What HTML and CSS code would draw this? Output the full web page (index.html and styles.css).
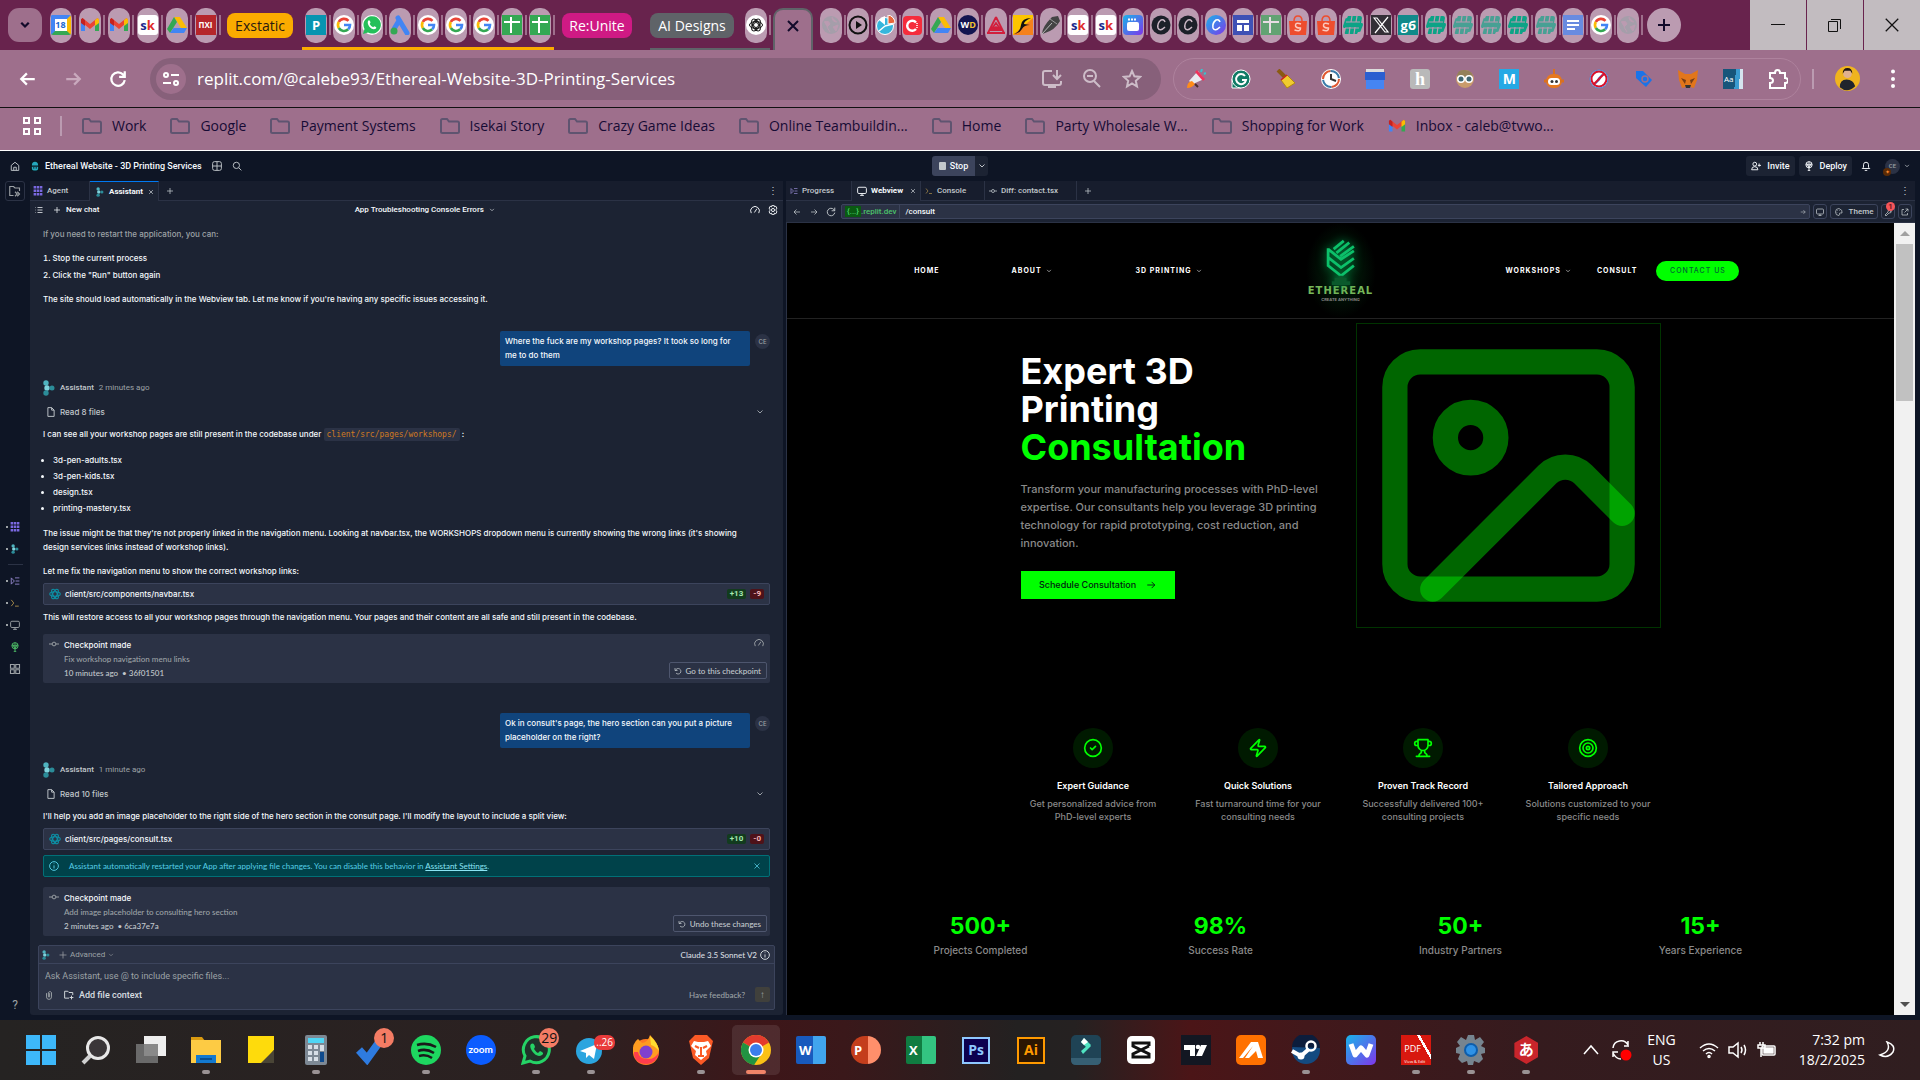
FILE: index.html
```html
<!DOCTYPE html>
<html lang="en">
<head>
<meta charset="utf-8">
<title>Ethereal Website - 3D Printing Services - Replit</title>
<link rel="stylesheet" href="styles.css">
</head>
<body>
<svg class="defs" aria-hidden="true">
  <symbol id="google" viewBox="0 0 20 20"><circle cx="10" cy="10" r="10" fill="#fff"/><g fill="none" stroke-width="2.6"><path d="M14.5 5.8A6 6 0 0 0 4.8 7" stroke="#ea4335"/><path d="M4.8 7a6 6 0 0 0 0 6" stroke="#fbbc05"/><path d="M4.8 13a6 6 0 0 0 9.4 1.3" stroke="#34a853"/><path d="M14.2 14.3A6 6 0 0 0 16 10h-6" stroke="#4285f4"/></g></symbol>
  <symbol id="gmail" viewBox="0 0 20 20"><path d="M1 4v12h4V8z" fill="#4285f4"/><path d="M19 4v12h-4V8z" fill="#34a853"/><path d="M1 4.500 2.500 3 10 9l7.500-6L19 4.500 18.500 7 10 14 1.500 7z" fill="#ea4335"/><path d="M15 5.200 17.500 3 19 4.500V8l-4 3z" fill="#fbbc04"/><path d="M1 8V4.500L2.500 3 5 5.200V11z" fill="#c5221f"/></symbol>
  <symbol id="drive" viewBox="0 0 20 20"><path d="M7 2h6l7 11h-6z" fill="#fbbc04"/><path d="M7 2 0 14l3 4 7-11z" fill="#34a853"/><path d="M6.500 13H20l-3 5H3z" fill="#4285f4"/></symbol>
  <symbol id="wa" viewBox="0 0 20 20"><circle cx="10" cy="10" r="10" fill="#fff"/><path d="m1 19 1.500-5A8.700 8.700 0 1 1 6 17.500z" fill="#25c05a"/><path d="M6 6c1-1.500 2-.5 2.500 1.500L7.700 9q1.200 2.500 3.500 3.300l1-1c2 .7 2.800 1.200 1.500 2.500C10 16 4.500 10 6 6z" fill="#fff"/></symbol>
  <symbol id="ads" viewBox="0 0 20 20"><path d="m8 3 9 15" stroke="#4285f4" stroke-width="5" stroke-linecap="round"/><path d="M10 4 4 14" stroke="#4285f4" stroke-width="5"/><circle cx="4" cy="16" r="3.500" fill="#34a853"/></symbol>
  <symbol id="sheet" viewBox="0 0 20 20"><path d="M0 0h20v20H0z" fill="#34a853"/><path d="M2 7h16M9 2v16" stroke="#fff" stroke-width="2"/></symbol>
  <symbol id="gpt" viewBox="0 0 20 20"><circle cx="10" cy="10" r="10" fill="#fff"/><g fill="none" stroke="#111"><circle cx="10" cy="10" r="2.500"/><ellipse cx="10" cy="10" rx="6.500" ry="3.500"/><ellipse cx="10" cy="10" rx="6.500" ry="3.500" transform="rotate(60 10 10)"/><ellipse cx="10" cy="10" rx="6.500" ry="3.500" transform="rotate(120 10 10)"/></g></symbol>
  <symbol id="globe" viewBox="0 0 20 20"><circle cx="10" cy="10" r="9" fill="#a59eaa"/><path d="M3 7q5-2 6 2l-3 3 3 5M11 2q0 5 5 5M12 12l5-2-2 6z" fill="#bb9bb1" stroke="#bb9bb1"/></symbol>
  <symbol id="play" viewBox="0 0 20 20"><circle cx="10" cy="10" r="8.500" fill="none" stroke="#111" stroke-width="2"/><path d="m8 6 6 4-6 4z" fill="#111"/></symbol>
  <symbol id="pie" viewBox="0 0 20 20"><circle cx="9" cy="11" r="8.500" fill="#36b6dc" stroke="#fff"/><path d="m9 11 8-2M9 11l-6 5" stroke="#fff" stroke-width="1.500"/><path d="M9 1v9L3 5q2-3 6-4z" fill="#fff"/><path d="M12 0a8 8 0 0 1 7 8l-7 1z" fill="#e8663a" stroke="#fff"/></symbol>
  <symbol id="redc" viewBox="0 0 20 20"><rect y="1" width="19" height="19" rx="4" fill="#f52c3c"/><path d="M13 7.500a5 5 0 1 0 0 6.500" fill="none" stroke="#fff" stroke-width="2.500"/><path d="M14 8v6" stroke="#fff" stroke-width="1.500" stroke-dasharray="1 1"/></symbol>
  <symbol id="tri" viewBox="0 0 20 20"><g fill="none" stroke="#d21f3c" stroke-width="1.800"><path d="M10 2 2 18M10 2l8 16M1 18h18M10 8l-5 7h10zM5 15l5-3 5 3"/></g></symbol>
  <symbol id="swan" viewBox="0 0 20 20"><path d="M0 0h20v20H0z" fill="#fdc500"/><path d="M0 20 20 3v17z" fill="#f5811e"/><path d="M1 19Q7 17 8 10t10-7q-7 3-7 6l6 1q-6 0-8 4-2 4-8 5z" fill="#111"/></symbol>
  <symbol id="pen" viewBox="0 0 20 20"><path d="M1 19Q1 12 11 2l6-1 2 5Q14 15 4 18z" fill="#444"/><path d="M1 19 11 8" stroke="#bbb"/><path d="m9 4 7 5" stroke="#999"/></symbol>
  <linearGradient id="gr" x2="1" y2="1"><stop stop-color="#18b5ea"/><stop offset="1" stop-color="#8036ea"/></linearGradient>
  <symbol id="grad" viewBox="0 0 20 20"><rect width="20" height="20" rx="4" fill="url(#gr)"/><rect x="4" y="7" width="12" height="9" rx="2" fill="#fff"/><path d="M5 4.500h8" stroke="#fff" stroke-width="2" stroke-dasharray="2 1"/></symbol>
  <symbol id="cdark" viewBox="0 0 20 20"><circle cx="10" cy="10" r="9.500" fill="#1c2029"/><path d="M14 7q-1-3-4-2-4 3-3 8 2 4 7-1" fill="none" stroke="#cbb8c6" stroke-width="1.500"/></symbol>
  <symbol id="canva" viewBox="0 0 20 20"><circle cx="10" cy="10" r="10" fill="url(#gr)"/><path d="M14 7q-1-3-4-2-4 3-3 8 2 4 7-1" fill="none" stroke="#fff" stroke-width="1.600"/></symbol>
  <symbol id="forms" viewBox="0 0 20 20"><path d="M0 0h20v20H0z" fill="#3f51b5"/><path d="M4 5h12v3H4zM4 10h5v6H4zM11 10h5v6h-5z" fill="#fff"/></symbol>
  <symbol id="shop" viewBox="0 0 20 20"><path d="M1 6h18l-1 14H2z" fill="#ee4d2d"/><path d="M6 6q0-5 4-5t4 5" fill="none" stroke="#ee4d2d" stroke-width="1.500"/><path d="M13 9q-5-2-5.500 1t5 3q.5 4-6 2" fill="none" stroke="#fbc8bd" stroke-width="1.500"/></symbol>
  <symbol id="weave" viewBox="0 0 20 20"><path d="M5 1h12q2 0 2 2l-1 5h1q1 0 1 2l-2 5q0 2-2 2h-1l-1 2H3q-2 0-1-2l1-4H1q-1 0-1-2l2-6q0-2 2-2z" fill="#0ca386"/><path d="M9 1 8 7m-1 5-1 8M14 1l-1 6m-1 5-1 7M3 7h14M2 13h14" stroke="#bb9bb1" stroke-width="1.200"/></symbol>
  <symbol id="xx" viewBox="0 0 20 20"><path d="M0 0h20v20H0z" fill="#332f36"/><path d="m3 3 11 14h3L6 3zM17 2 4 18" fill="none" stroke="#fff" stroke-width="1.200"/></symbol>
  <symbol id="doc" viewBox="0 0 20 20"><path d="M0 0h20v20H0z" fill="#688be0"/><path d="M4 6h12M4 10h12M4 14h8" stroke="#fff" stroke-width="1.800"/></symbol>

  <symbol id="x" viewBox="0 0 16 16"><path d="m3 3 10 10M13 3 3 13"/></symbol>
  <symbol id="plus" viewBox="0 0 16 16"><path d="M8 2v12M2 8h12"/></symbol>
  <symbol id="down" viewBox="0 0 16 16"><path d="m3 5 5 5 5-5"/></symbol>
  <symbol id="left" viewBox="0 0 16 16"><path d="M14 8H2m5-5L2 8l5 5"/></symbol>
  <symbol id="right" viewBox="0 0 16 16"><path d="M2 8h12M9 3l5 5-5 5"/></symbol>
  <symbol id="reload" viewBox="0 0 16 16"><path d="M14 9a6 6 0 1 1-1.500-5L14 6M14 1v5H9"/></symbol>
  <symbol id="undo" viewBox="0 0 16 16"><path d="M3 7a5.500 5.500 0 1 1 1 5M2 2v5h5"/></symbol>
  <symbol id="folder" viewBox="0 0 20 16"><path d="M1 2.500Q1 1 2.500 1H7l2 2.500h8.500Q19 3.500 19 5v8.500q0 1.500-1.500 1.500h-15Q1 15 1 13.500z"/></symbol>
  <symbol id="monitor" viewBox="0 0 16 16"><rect x="1" y="2" width="14" height="10" rx="2"/><path d="M5 15h6M8 12v3"/></symbol>
  <symbol id="home" viewBox="0 0 16 16"><path d="m2 7 6-5 6 5v8H2zM6 15v-5h4v5"/></symbol>
  <symbol id="search" viewBox="0 0 16 16"><circle cx="7" cy="7" r="5"/><path d="m11 11 4 4"/></symbol>
  <symbol id="grid4" viewBox="0 0 16 16"><path d="M2 2h5v5H2zM9 2h5v5H9zM2 9h5v5H2zM9 9h5v5H9z"/></symbol>
  <symbol id="layout" viewBox="0 0 16 16"><rect x="1" y="1" width="14" height="14" rx="3"/><path d="M1 8h14M8 1v14"/></symbol>
  <symbol id="dots9" viewBox="0 0 16 16"><path d="M3 0v16M8 0v16M13 0v16" stroke-width="4" stroke-dasharray="4 1.500"/></symbol>
  <symbol id="asst" viewBox="0 0 12 16"><circle cx="3" cy="3" r="2.700" fill="#4fb3bf"/><circle cx="4" cy="8" r="2.700" fill="#7fd3dc"/><circle cx="9" cy="8" r="2.500" fill="#2b8c99"/><circle cx="3" cy="13" r="2.700" fill="#2b8c99"/></symbol>
  <symbol id="prog" viewBox="0 0 16 16"><path d="M2 3v10M2 3l5 5-5 5M8 3h7M9 8h6M8 13h7"/></symbol>
  <symbol id="term" viewBox="0 0 16 16"><path d="m2 3 4 5-4 5M8 13h6"/></symbol>
  <symbol id="commit" viewBox="0 0 16 16"><circle cx="8" cy="8" r="3"/><path d="M0 8h5m6 0h5"/></symbol>
  <symbol id="tree" viewBox="0 0 16 16"><circle cx="8" cy="6" r="5"/><path d="M3 6h10M8 1v14M4 3l4 8 4-8M6 15h4"/></symbol>
  <symbol id="gauge" viewBox="0 0 16 16"><path d="M2 13a7 7 0 1 1 12 0M7 12l4-6"/></symbol>
  <symbol id="gear" viewBox="0 0 16 16"><circle cx="8" cy="8" r="2.500"/><path d="m6 1-.5 2L3.500 2 1.800 5 3 7v2l-1.200 2 1.700 3 2-1 .5 2h4l.5-2 2 1 1.700-3L13 9V7l1.200-2-1.700-3-2 1L10 1z"/></symbol>
  <symbol id="palette" viewBox="0 0 16 16"><path d="M8 1a7 7 0 1 0 0 14q2-1 1-3t2-2h3q2-6-6-9zM5 5v1M9 4v1M4 9v1"/></symbol>
  <symbol id="list" viewBox="0 0 16 16"><path d="M5 3h10M5 8h10M5 13h10M1 3h1M1 8h1M1 13h1"/></symbol>
  <symbol id="file" viewBox="0 0 12 16"><path d="M1 1h6l4 4v10H1zM7 1v4h4"/></symbol>
  <symbol id="react" viewBox="0 0 16 16"><ellipse cx="8" cy="8" rx="7" ry="3"/><ellipse cx="8" cy="8" rx="7" ry="3" transform="rotate(60 8 8)"/><ellipse cx="8" cy="8" rx="7" ry="3" transform="rotate(120 8 8)"/></symbol>
  <symbol id="info" viewBox="0 0 16 16"><circle cx="8" cy="8" r="7"/><path d="M8 7v5M8 4v1"/></symbol>
  <symbol id="clip" viewBox="0 0 16 16"><path d="M4 5v6a4 4 0 0 0 8 0V4a3 3 0 0 0-5 0v7h2V5"/></symbol>
  <symbol id="folderplus" viewBox="0 0 16 16"><path d="M8 13H1V2h5l2 2h6v4M12 9v6M9 12h6"/></symbol>
  <symbol id="spark" viewBox="0 0 16 16"><path d="M8 1v14M1 8h14"/></symbol>
  <symbol id="bell" viewBox="0 0 16 16"><path d="M2 12h12l-2-2V6a4 4 0 0 0-8 0v4zM6 15h4"/></symbol>
  <symbol id="user" viewBox="0 0 16 16"><circle cx="6" cy="5" r="3"/><path d="M1 14q0-5 5-5t5 5zM13 4v5m-2-2h5"/></symbol>
  <symbol id="ext" viewBox="0 0 16 16"><path d="M6 3H2v11h11v-4M9 2h5v5M14 2 7 9"/></symbol>
  <symbol id="wrench" viewBox="0 0 16 16"><path d="m2 14 6-6q-1-5 5-6l-2 3 2 2 2-2q0 6-5 5l-6 6z"/></symbol>
  <symbol id="star" viewBox="0 0 20 20"><path d="m10 2 2.400 5.300 5.600.6-4.200 3.900 1.200 5.700-5-3-5 3 1.200-5.700L2 7.900l5.600-.6z"/></symbol>
</svg>

<header class="browser">
  <div class="tabstrip">
    <button class="tab-menu" aria-label="Search tabs"><svg class="i s12"><use href="#down"/></svg></button>
    <div class="tabs t-a">
      <button><b class="fav cal">18</b></button><button aria-label="Gmail"><svg><use href="#gmail"/></svg></button><button aria-label="Gmail"><svg><use href="#gmail"/></svg></button><button><b class="fav sk">s<i>k</i></b></button><button aria-label="Drive"><svg><use href="#drive"/></svg></button><button><b class="fav rm">ПXI</b></button>
    </div>
    <button class="group orange">Exstatic</button>
    <div class="tabs t-b">
      <button><b class="fav teal">P</b></button><button aria-label="Google"><svg><use href="#google"/></svg></button><button aria-label="WhatsApp"><svg><use href="#wa"/></svg></button><button aria-label="Ads"><svg><use href="#ads"/></svg></button><button aria-label="Google"><svg><use href="#google"/></svg></button><button aria-label="Google"><svg><use href="#google"/></svg></button><button aria-label="Google"><svg><use href="#google"/></svg></button><button aria-label="Sheet"><svg><use href="#sheet"/></svg></button><button aria-label="Sheet"><svg><use href="#sheet"/></svg></button>
    </div>
    <button class="group pink">Re:Unite</button>
    <div class="ai">
      <button class="group grey">AI Designs</button>
      <div class="tabs t-c"><button aria-label="ChatGPT"><svg><use href="#gpt"/></svg></button></div>
    </div>
    <button class="active-tab" aria-label="Close tab"><svg class="i s16"><use href="#x"/></svg></button>
    <div class="tabs t-d">
      <button aria-label="New tab"><svg><use href="#globe"/></svg></button><button aria-label="Player"><svg><use href="#play"/></svg></button><button aria-label="Chart"><svg><use href="#pie"/></svg></button><button aria-label="Carousell"><svg><use href="#redc"/></svg></button><button aria-label="Drive"><svg><use href="#drive"/></svg></button><button><b class="fav navy">W<i>D</i></b></button><button aria-label="Prism"><svg><use href="#tri"/></svg></button><button aria-label="Swan"><svg><use href="#swan"/></svg></button><button aria-label="Pen"><svg><use href="#pen"/></svg></button><button><b class="fav sk">s<i>k</i></b></button><button><b class="fav sk">s<i>k</i></b></button><button aria-label="Planner"><svg><use href="#grad"/></svg></button><button aria-label="C"><svg><use href="#cdark"/></svg></button><button aria-label="C"><svg><use href="#cdark"/></svg></button><button aria-label="Canva"><svg><use href="#canva"/></svg></button><button aria-label="Forms"><svg><use href="#forms"/></svg></button><button class="dim" aria-label="Sheet"><svg><use href="#sheet"/></svg></button><button aria-label="Shopee"><svg><use href="#shop"/></svg></button><button aria-label="Shopee"><svg><use href="#shop"/></svg></button><button aria-label="Weave"><svg><use href="#weave"/></svg></button><button aria-label="X"><svg><use href="#xx"/></svg></button><button><b class="fav gb">gб</b></button><button aria-label="Weave"><svg><use href="#weave"/></svg></button><button class="dim" aria-label="Weave"><svg><use href="#weave"/></svg></button><button class="dim" aria-label="Weave"><svg><use href="#weave"/></svg></button><button aria-label="Weave"><svg><use href="#weave"/></svg></button><button class="dim" aria-label="Weave"><svg><use href="#weave"/></svg></button><button aria-label="Doc"><svg><use href="#doc"/></svg></button><button aria-label="Google"><svg><use href="#google"/></svg></button><button aria-label="New tab"><svg><use href="#globe"/></svg></button>
    </div>
    <button class="new-tab" aria-label="New tab"><svg class="i s16 w2"><use href="#plus"/></svg></button>
    <div class="win">
      <button aria-label="Minimize"><svg class="i s16 w1" viewBox="0 0 16 16"><path d="M1 7.500h14"/></svg></button>
      <button aria-label="Restore"><svg class="i s16 w1" viewBox="0 0 16 16"><path d="M1.500 4.500h9v10h-9zM4 2.500h9.500V12"/></svg></button>
      <button aria-label="Close"><svg class="i s20 w1"><use href="#x"/></svg></button>
    </div>
  </div>
  <div class="toolbar">
    <button aria-label="Back"><svg class="i s18 w2"><use href="#left"/></svg></button>
    <button class="faded" aria-label="Forward"><svg class="i s18 w2"><use href="#right"/></svg></button>
    <button aria-label="Reload"><svg class="i s18 w2"><use href="#reload"/></svg></button>
    <div class="omni">
      <button class="site" aria-label="Site information"><svg class="i s18 w2" viewBox="0 0 18 18"><circle cx="4" cy="5" r="2"/><path d="M9 5h8M1 13h8"/><circle cx="14" cy="13" r="2"/></svg></button>
      <input class="address" aria-label="Address" value="replit.com/@calebe93/Ethereal-Website-3D-Printing-Services">
      <div class="omni-icons">
        <button aria-label="Install"><svg class="i s20 w2" viewBox="0 0 20 20"><path d="M10 2H3q-2 0-2 2v10q0 2 2 2h14q2 0 2-2v-2M6 18h8M15 1v9m-4-4 4 4 4-4"/></svg></button>
        <button aria-label="Zoom"><svg class="i s20 w2" viewBox="0 0 20 20"><circle cx="8" cy="7" r="6"/><path d="m12 12 6 6M5 7h6"/></svg></button>
        <button aria-label="Bookmark"><svg class="i s20 w2"><use href="#star"/></svg></button>
      </div>
    </div>
    <div class="exts">
      <button aria-label="Megaphone"><svg viewBox="0 0 20 20"><path d="m3 12 9-10 6 8-11 5z" fill="#e8eaf0"/><path d="m11 1 8 9-2 2-8-9z" fill="#f0325c"/><path d="M1 19q0-6 5-7l3 3q-3 4-8 4z" fill="#ff8c1a"/><path d="m9 15 3 3" stroke="#4a2c2c" stroke-width="2"/><path d="m15 3 1-3M18 5l2-1" stroke="#35c4cf" stroke-width="2"/></svg></button>
      <button aria-label="Grammarly"><svg viewBox="0 0 20 20"><path d="M1 10v9h9" fill="#107b66" stroke="#fff"/><circle cx="10" cy="10" r="9" fill="#107b66" stroke="#fff"/><path d="M14 7a5 5 0 1 0 1 4h-4" fill="none" stroke="#fff" stroke-width="2"/></svg></button>
      <button aria-label="Cleaner"><svg viewBox="0 0 20 20"><path d="m2 1 9 9" stroke="#8a5a12" stroke-width="4"/><path d="m5 11 6-5 8 8-8 5z" fill="#f0cc2e" stroke="#b38a10"/><path d="m5 11 6-5" stroke="#c22" stroke-width="1.500"/></svg></button>
      <button aria-label="Timer"><svg viewBox="0 0 20 20"><circle cx="10" cy="10" r="10" fill="#fff"/><circle cx="10" cy="10" r="8" fill="none" stroke="#e0572f" stroke-width="2" stroke-dasharray="12 13"/><circle cx="10" cy="10" r="8" fill="none" stroke="#3a7aa8" stroke-width="2" stroke-dasharray="0 12 12 1"/><path d="M10 5v5l5 2" fill="none" stroke="#333" stroke-width="2"/></svg></button>
      <button aria-label="Notes"><svg viewBox="0 0 20 20"><path d="M1 0h18v3H1z" fill="#ddd"/><path d="M0 3h20v8H0z" fill="#2b5fd0"/><path d="M1 11h18v9H1z" fill="#4585f2"/></svg></button>
      <button><b class="fav honey">h</b></button>
      <button aria-label="Reader"><svg viewBox="0 0 20 20"><circle cx="10" cy="10" r="9" fill="#c99b6b"/><path d="M2 8Q2 0 10 1t8 7z" fill="#94805a"/><circle cx="6" cy="10" r="4" fill="#fff"/><circle cx="14" cy="10" r="4" fill="#fff"/><circle cx="6" cy="10" r="2.500" fill="#3e6570"/><circle cx="14" cy="10" r="2.500" fill="#3e6570"/></svg></button>
      <button><b class="fav malw">M</b></button>
      <button aria-label="Robot"><svg viewBox="0 0 20 20"><path d="M10 0v5" stroke="#d9701f" stroke-width="2"/><rect x="2" y="5" width="16" height="14" rx="7" fill="#e6781e"/><path d="M0 12h20" stroke="#d9701f" stroke-width="3"/><rect x="4" y="9" width="12" height="7" rx="3.500" fill="#fff"/><circle cx="8" cy="12.500" r="1.500" fill="#333"/><circle cx="12.500" cy="12.500" r="1.500" fill="#333"/></svg></button>
      <button aria-label="Blocker"><svg viewBox="0 0 20 20"><circle cx="10" cy="10" r="9" fill="#fff" stroke="#4a90e2"/><path d="m14 4-3 7-5 5 3-7z" fill="#2b62c9"/><circle cx="10" cy="10" r="7.500" fill="none" stroke="#d6102c" stroke-width="2"/><path d="M15 5 5 15" stroke="#d6102c" stroke-width="2"/></svg></button>
      <button aria-label="Tag"><svg viewBox="0 0 20 20"><path d="M2 2h7l9 9-6 7L2 9z" fill="#1a73e8"/><circle cx="11" cy="10" r="3" fill="none" stroke="#9c6f8b" stroke-width="1.500"/></svg></button>
      <button aria-label="MetaMask"><svg viewBox="0 0 20 20"><path d="m0 1 7 4h6l7-4-1 10-3 8-4-1H8l-4 1-3-8z" fill="#e2761b"/><path d="M3 9 8 11l-1 4zM17 9l-5 2 1 4z" fill="#763d16"/><path d="M7 16h6l-1 3H8z" fill="#333"/></svg></button>
      <button><b class="fav dict">Aa</b></button>
      <button aria-label="Extensions"><svg class="i w2" viewBox="0 0 20 20"><path d="M2 4h5q0-3 2.500-3T12 4h5v5q3 0 3 2.500T17 14v5H2v-5q3 0 3-2.500T2 9z"/></svg></button>
    </div>
    <span class="bar"></span>
    <button class="profile" aria-label="Profile"><svg viewBox="0 0 26 26"><circle cx="13" cy="13" r="13" fill="#f0b41e"/><path d="M5 22q0-8 7-8t9 7q-8 8-16 1z" fill="#20242c"/><circle cx="13" cy="8" r="4.500" fill="#e0b090"/><path d="M8 8q0-6 5-6t5 6l-2-3h-6z" fill="#1c1414"/></svg></button>
    <button class="kebab" aria-label="Menu"><svg class="s20" viewBox="0 0 20 20" fill="#fff"><circle cx="10" cy="2.500" r="2"/><circle cx="10" cy="10" r="2"/><circle cx="10" cy="17" r="2"/></svg></button>
  </div>
  <nav class="bookmarks">
    <svg class="i s20 w2 apps" viewBox="0 0 20 20"><path d="M2 2h5v5H2zM13 2h5v5h-5zM2 13h5v5H2zM13 13h5v5h-5z"/></svg>
    <span class="bar"></span>
    <a href="#"><svg class="i fold"><use href="#folder"/></svg>Work</a><a href="#"><svg class="i fold"><use href="#folder"/></svg>Google</a><a href="#"><svg class="i fold"><use href="#folder"/></svg>Payment Systems</a><a href="#"><svg class="i fold"><use href="#folder"/></svg>Isekai Story</a><a href="#"><svg class="i fold"><use href="#folder"/></svg>Crazy Game Ideas</a><a href="#"><svg class="i fold"><use href="#folder"/></svg>Online Teambuildin...</a><a href="#"><svg class="i fold"><use href="#folder"/></svg>Home</a><a href="#"><svg class="i fold"><use href="#folder"/></svg>Party Wholesale W...</a><a href="#"><svg class="i fold"><use href="#folder"/></svg>Shopping for Work</a><a href="#"><svg class="s18"><use href="#gmail"/></svg>Inbox - caleb@tvwo...</a>
  </nav>
</header>

<main class="replit">
  <div class="topbar">
    <div class="top-left">
      <button aria-label="Home"><svg class="i s10"><use href="#home"/></svg></button>
      <span class="appicon"><svg class="s10" viewBox="0 0 16 16"><path d="M3 7q0-6 5-6t5 6zM3 9h10v3q0 3-3 3H6q-3 0-3-3z" fill="#25a9bd"/><path d="M5 11h2m2 0h2" stroke="#0b2229" stroke-width="2"/></svg></span>
      <b>Ethereal Website - 3D Printing Services</b>
      <button aria-label="Layout"><svg class="i s10"><use href="#layout"/></svg></button>
      <button aria-label="Search"><svg class="i s10"><use href="#search"/></svg></button>
    </div>
    <div class="stop"><button class="stop-main"><i></i>Stop</button><button class="stop-more" aria-label="Run options"><svg class="i s8"><use href="#down"/></svg></button></div>
    <div class="top-right">
      <button class="chip"><svg class="i s10"><use href="#user"/></svg>Invite</button>
      <button class="chip"><svg class="i s10"><use href="#tree"/></svg>Deploy</button>
      <button class="bell" aria-label="Notifications"><svg class="i s10"><use href="#bell"/></svg></button>
      <span class="me">CE<i>✦</i></span>
      <svg class="i s6"><use href="#down"/></svg>
    </div>
  </div>
  <div class="work">
    <aside class="rail">
      <button class="rail-files" aria-label="Files"><svg class="i s12" viewBox="0 0 16 16"><path d="M6 14H1V2h5l2 2h6v4M8 9l3 3-3 3m3-6 3 3-3 3"/></svg></button>
      <div class="rail-tools">
        <button class="on violet" aria-label="Agent"><svg class="i s10"><use href="#dots9"/></svg></button>
        <button class="on" aria-label="Assistant"><svg class="s10"><use href="#asst"/></svg></button>
        <hr>
        <button class="on lilac" aria-label="Progress"><svg class="i s10"><use href="#prog"/></svg></button>
        <button class="on sand" aria-label="Console"><svg class="i s10"><use href="#term"/></svg></button>
        <button class="on" aria-label="Webview"><svg class="i s10"><use href="#monitor"/></svg></button>
        <button class="leaf" aria-label="Deployments"><svg class="i s10"><use href="#tree"/></svg></button>
        <button aria-label="All tools"><svg class="i s12"><use href="#grid4"/></svg></button>
      </div>
      <button class="help">?</button>
    </aside>

    <section class="pane chat-pane">
      <div class="pane-tabs">
        <button class="ptab agent"><svg class="i s10 violet"><use href="#dots9"/></svg>Agent</button>
        <button class="ptab sel"><svg class="s10"><use href="#asst"/></svg>Assistant<svg class="i s6 close"><use href="#x"/></svg></button>
        <button class="ptab add" aria-label="Add tab"><svg class="i s8"><use href="#plus"/></svg></button>
        <button class="more" aria-label="Pane menu">⋮</button>
      </div>
      <div class="chat-head">
        <div><svg class="i s8"><use href="#list"/></svg><button class="newchat"><svg class="i s8"><use href="#plus"/></svg>New chat</button></div>
        <button class="ttl">App Troubleshooting Console Errors<svg class="i s6"><use href="#down"/></svg></button>
        <div class="end"><svg class="i s10"><use href="#gauge"/></svg><svg class="i s10"><use href="#gear"/></svg></div>
      </div>
      <div class="chat">
        <p class="old">If you need to restart the application, you can:</p>
        <ol><li>Stop the current process</li><li>Click the "Run" button again</li></ol>
        <p>The site should load automatically in the Webview tab. Let me know if you're having any specific issues accessing it.</p>
        <div class="user"><p>Where the fuck are my workshop pages? It took so long for me to do them</p><span class="av">CE</span></div>
        <div class="who"><svg><use href="#asst"/></svg><b>Assistant</b> 2 minutes ago</div>
        <div class="read"><svg class="i s10"><use href="#file"/></svg>Read 8 files<svg class="i s8 push"><use href="#down"/></svg></div>
        <p class="intro">I can see all your workshop pages are still present in the codebase under <code>client/src/pages/workshops/</code> :</p>
        <ul><li>3d-pen-adults.tsx</li><li>3d-pen-kids.tsx</li><li>design.tsx</li><li>printing-mastery.tsx</li></ul>
        <p>The issue might be that they're not properly linked in the navigation menu. Looking at navbar.tsx, the WORKSHOPS dropdown menu is currently showing the wrong links (it's showing design services links instead of workshop links).</p>
        <p class="gap">Let me fix the navigation menu to show the correct workshop links:</p>
        <div class="filebox"><svg class="i s12 cyan"><use href="#react"/></svg>client/src/components/navbar.tsx<em class="add">+13</em><em class="del">-9</em></div>
        <p class="after">This will restore access to all your workshop pages through the navigation menu. Your pages and their content are all safe and still present in the codebase.</p>
        <div class="check">
          <svg class="i s10"><use href="#commit"/></svg>
          <div><b>Checkpoint made</b><span>Fix workshop navigation menu links</span><span class="lt">10 minutes ago &nbsp;• 36f01501</span></div>
          <div class="check-r"><svg class="i s10"><use href="#gauge"/></svg><button><svg class="i s8"><use href="#undo"/></svg>Go to this checkpoint</button></div>
        </div>
        <div class="user"><p>Ok in consult's page, the hero section can you put a picture placeholder on the right?</p><span class="av">CE</span></div>
        <div class="who"><svg><use href="#asst"/></svg><b>Assistant</b> 1 minute ago</div>
        <div class="read"><svg class="i s10"><use href="#file"/></svg>Read 10 files<svg class="i s8 push"><use href="#down"/></svg></div>
        <p class="intro">I'll help you add an image placeholder to the right side of the hero section in the consult page. I'll modify the layout to include a split view:</p>
        <div class="filebox"><svg class="i s12 cyan"><use href="#react"/></svg>client/src/pages/consult.tsx<em class="add">+10</em><em class="del">-0</em></div>
        <div class="notice"><svg class="i s10"><use href="#info"/></svg><span>Assistant automatically restarted your App after applying file changes. You can disable this behavior in <a href="#">Assistant Settings</a>.</span><button aria-label="Dismiss"><svg class="i s8"><use href="#x"/></svg></button></div>
        <div class="check last">
          <svg class="i s10"><use href="#commit"/></svg>
          <div><b>Checkpoint made</b><span>Add image placeholder to consulting hero section</span><span class="lt">2 minutes ago &nbsp;• 6ca37e7a</span></div>
          <div class="check-r"><button><svg class="i s8"><use href="#undo"/></svg>Undo these changes</button></div>
        </div>
      </div>
      <form class="composer">
        <div class="comp-top"><svg class="s10"><use href="#asst"/></svg><button type="button"><svg class="i s8"><use href="#spark"/></svg>Advanced<svg class="i s6"><use href="#down"/></svg></button><span class="model">Claude 3.5 Sonnet V2<svg class="i s10"><use href="#info"/></svg></span></div>
        <input aria-label="Message" placeholder="Ask Assistant, use @ to include specific files...">
        <div class="comp-bot"><svg class="i s10"><use href="#clip"/></svg><button type="button" class="ctx"><svg class="i s10"><use href="#folderplus"/></svg>Add file context</button><a href="#">Have feedback?</a><button type="button" class="send">↑</button></div>
      </form>
    </section>

    <section class="pane web-pane">
      <div class="pane-tabs">
        <button class="ptab p1"><svg class="i s8 lilac"><use href="#prog"/></svg>Progress</button>
        <button class="ptab sel"><svg class="i s10"><use href="#monitor"/></svg>Webview<svg class="i s6 close"><use href="#x"/></svg></button>
        <button class="ptab p3"><svg class="i s8 sand"><use href="#term"/></svg>Console</button>
        <button class="ptab p4"><svg class="i s8"><use href="#commit"/></svg>Diff: contact.tsx</button>
        <button class="ptab add" aria-label="Add tab"><svg class="i s8"><use href="#plus"/></svg></button>
        <button class="more" aria-label="Pane menu">⋮</button>
      </div>
      <div class="urlrow">
        <button aria-label="Back"><svg class="i s8"><use href="#left"/></svg></button>
        <button aria-label="Forward"><svg class="i s8"><use href="#right"/></svg></button>
        <button aria-label="Reload"><svg class="i s10"><use href="#reload"/></svg></button>
        <label class="urlbox"><span class="host"><mark>{...}</mark>.replit.dev</span><input aria-label="Path" value="/consult"><svg class="i s6"><use href="#right"/></svg></label>
        <button class="ob" aria-label="Device"><svg class="i s8"><use href="#monitor"/></svg></button>
        <button class="ob wide"><svg class="i s8"><use href="#palette"/></svg>Theme</button>
        <button class="ob" aria-label="Developer tools"><svg class="i s8"><use href="#wrench"/></svg><i class="cnt">1</i></button>
        <button class="ob" aria-label="Open in new tab"><svg class="i s8"><use href="#ext"/></svg></button>
      </div>
      <div class="view">
        <div class="site-page">
          <nav class="sitenav">
            <div class="navl"><a href="#">HOME</a><div class="menus"><a href="#">ABOUT<svg class="i s6"><use href="#down"/></svg></a><a href="#">3D PRINTING<svg class="i s6"><use href="#down"/></svg></a></div></div>
            <div class="logo"><svg viewBox="0 0 36 50"><g fill="none" stroke="#0cc06a" stroke-width="3"><path d="M4 10v19l14 11 14-11M4 11l14 11 14-9M4 20l14 11 14-10M13 15 27 4M10 11 21 2M17 19l15-11"/></g><path d="M18 40v3M11 44h13M8 48h20" stroke="#0a5a2c" stroke-width="4"/></svg><b>ETHEREAL</b><small>CREATE ANYTHING</small></div>
            <div class="navr"><a href="#">WORKSHOPS<svg class="i s6"><use href="#down"/></svg></a><div class="cta"><a href="#">CONSULT</a><a class="contact" href="#">CONTACT US</a></div></div>
          </nav>
          <section class="hero">
            <div class="hero-text">
              <h1>Expert 3D<br>Printing<br><span>Consultation</span></h1>
              <p>Transform your manufacturing processes with PhD-level expertise. Our consultants help you leverage 3D printing technology for rapid prototyping, cost reduction, and innovation.</p>
              <button>Schedule Consultation<svg class="i s10"><use href="#right"/></svg></button>
            </div>
            <div class="ph"><svg viewBox="0 0 24 24"><rect x="3" y="3" width="18" height="18" rx="2"/><circle cx="9" cy="9" r="2"/><path d="m21 15-3.086-3.086a2 2 0 0 0-2.828 0L6 21"/></svg></div>
          </section>
          <section class="feats">
            <div><span><svg viewBox="0 0 24 24"><circle cx="12" cy="12" r="10"/><path d="m9 12 2 2 4-4"/></svg></span><h3>Expert Guidance</h3><p>Get personalized advice from PhD-level experts</p></div>
            <div><span><svg viewBox="0 0 24 24"><path d="M4 14a1 1 0 0 1-.78-1.630l9.900-10.200a.5.5 0 0 1 .86.460l-1.920 6.020A1 1 0 0 0 13 10h7a1 1 0 0 1 .78 1.630l-9.900 10.200a.5.5 0 0 1-.86-.460l1.920-6.020A1 1 0 0 0 11 14z"/></svg></span><h3>Quick Solutions</h3><p>Fast turnaround time for your consulting needs</p></div>
            <div><span><svg viewBox="0 0 24 24"><path d="M6 9H4.500a2.500 2.500 0 0 1 0-5H6M18 9h1.500a2.500 2.500 0 0 0 0-5H18M4 22h16M10 14.660V17c0 .55-.47.98-.97 1.210C7.850 18.750 7 20.240 7 22M14 14.660V17c0 .55.47.98.97 1.210C16.150 18.750 17 20.240 17 22M18 2H6v7a6 6 0 0 0 12 0V2Z"/></svg></span><h3>Proven Track Record</h3><p>Successfully delivered 100+ consulting projects</p></div>
            <div><span><svg viewBox="0 0 24 24"><circle cx="12" cy="12" r="10"/><circle cx="12" cy="12" r="6"/><circle cx="12" cy="12" r="2"/></svg></span><h3>Tailored Approach</h3><p>Solutions customized to your specific needs</p></div>
          </section>
          <section class="stats">
            <div><b>500+</b>Projects Completed</div><div><b>98%</b>Success Rate</div><div><b>50+</b>Industry Partners</div><div><b>15+</b>Years Experience</div>
          </section>
        </div>
        <div class="scroll"><i class="up"></i><span></span><i class="dn"></i></div>
      </div>
    </section>
  </div>
</main>

<footer class="taskbar">
  <div class="apps-row">
    <button aria-label="Start"><svg viewBox="0 0 30 30"><path d="M0 0h14v14H0zM16 0h14v14H16zM0 16h14v14H0zM16 16h14v14H16z" fill="#3db8fa"/></svg></button>
    <button aria-label="Search"><svg viewBox="0 0 30 30"><circle cx="17" cy="13" r="10.500" fill="#3a3638" stroke="#e8e8e8" stroke-width="3"/><path d="m9 21-7 7" stroke="#d0d0d0" stroke-width="4"/></svg></button>
    <button aria-label="Task view"><svg viewBox="0 0 30 30"><path d="M8 1h22v20H8z" fill="#eee"/><path d="M0 9h22v19H0z" fill="#777" opacity=".85"/></svg></button>
    <button class="run" aria-label="Explorer"><svg viewBox="0 0 30 30"><path d="M0 2h11l3 4H0z" fill="#d99a10"/><path d="M0 5h30v23H0z" fill="#fdcb44"/><path d="M5 20h20v8H5z" fill="#1379cf"/><path d="M9 24h12" stroke="#084f92" stroke-width="2"/></svg></button>
    <button aria-label="Sticky notes"><svg viewBox="0 0 30 30"><path d="M2 1h26v14L17 28H2z" fill="#fedb0c"/><path d="M28 15v13H15z" fill="#4a4536"/></svg></button>
    <button class="run" aria-label="Calculator"><svg viewBox="0 0 30 30"><rect x="4" width="22" height="30" rx="2" fill="#7d8894"/><path d="M7 3h16v5H7z" fill="#4fd6f5"/><path d="M9 10v18M15 10v18" stroke="#d7dee6" stroke-width="4" stroke-dasharray="4 2"/><path d="M21 10v6" stroke="#d7dee6" stroke-width="4"/><path d="M21 17v10" stroke="#0e4a8d" stroke-width="4"/></svg></button>
    <button><svg viewBox="0 0 30 30" aria-hidden="true"><path d="m3 15 8 9L24 6" fill="none" stroke="#2e7be0" stroke-width="8"/></svg><i class="note">1</i></button>
    <button class="run" aria-label="Spotify"><svg viewBox="0 0 30 30"><circle cx="15" cy="15" r="15" fill="#1ed760"/><path d="M6 10q10-3 19 2M7 16q8-3 16 2M8 21q7-2 13 2" fill="none" stroke="#1a1a1a" stroke-width="2.500"/></svg></button>
    <button><b class="zoom">zoom</b></button>
    <button class="run"><svg viewBox="0 0 30 30" aria-hidden="true"><path d="m2 28 2-7A13 13 0 1 1 9 26z" fill="#20322a" stroke="#25d366" stroke-width="3"/><path d="M10 9q3-2 4 3l-1 2q2 3 4 4l2-2q5 2 2 4-5 3-10-4-3-5-1-7z" fill="#25d366"/></svg><i class="note">29</i></button>
    <button class="run"><svg viewBox="0 0 30 30" aria-hidden="true"><circle cx="13" cy="16" r="13" fill="#2ba5df"/><path d="m4 16 17-7-3 15-5-4-3 3v-5z" fill="#fff"/></svg><i class="note sq">..26</i></button>
    <button aria-label="Firefox"><svg viewBox="0 0 30 30"><circle cx="15" cy="17" r="13" fill="#ff7a22"/><path d="M2 18Q1 8 7 4l4 4q6-1 8-8 8 8 9 15-1 12-13 14z" fill="#ff9c20"/><path d="M19 1q8 7 9 15-4-5-8-6z" fill="#ffdd30"/><circle cx="15" cy="17" r="6.500" fill="#8040d0"/><path d="M3 17q0 12 13 12 10-1 12-12-4 8-13 7-7-1-8-7z" fill="#ff3d4d"/></svg></button>
    <button class="run" aria-label="Brave"><svg viewBox="0 0 30 30"><path d="m9 0h12l3 3 3 3-1 4-3 13-8 7-8-7L4 10 3 6l3-3z" fill="#fb5a26"/><path d="m8 6 4 1h6l4-1 3 5-5 5 1 4-6 5-6-5 1-4-5-5z" fill="#fff"/><path d="m9 11 4 2M21 11l-4 2M15 12v8M12 21h6" stroke="#fb5a26" stroke-width="2"/></svg></button>
    <button class="run cur" aria-label="Chrome"><svg viewBox="0 0 30 30"><circle cx="15" cy="15" r="15" fill="#fbc116"/><path d="M15 15 2 7.500a15 15 0 0 1 26 0z" fill="#e33b2e"/><path d="M15 15 2 7.500A15 15 0 0 0 13 30l8-12z" fill="#229342"/><circle cx="15" cy="15" r="7.500" fill="#fff"/><circle cx="15" cy="15" r="6" fill="#3b7ded"/></svg></button>
    <button><b class="office word">W</b></button>
    <button><b class="office ppt">P</b></button>
    <button><b class="office xls">X</b></button>
    <button><b class="adobe ps">Ps</b></button>
    <button><b class="adobe aii">Ai</b></button>
    <button aria-label="Filmora"><svg viewBox="0 0 30 30"><rect width="30" height="30" rx="5" fill="#1f4355"/><path d="M0 23h30v2q0 5-5 5H5q-5 0-5-5z" fill="#365f73"/><path d="m13 3 7 7-3 4-4-4-3-3zM20 11l-8 8-2-3 7-6z" fill="#50e3c2"/><path d="m13 3 4 4-4 3-3-3z" fill="#fff"/></svg></button>
    <button aria-label="CapCut"><svg viewBox="0 0 30 30"><rect x="1" y="1" width="28" height="28" rx="5" fill="#fff"/><path d="M23 11V8H7v3l16 8v3H7v-3l16-8" fill="none" stroke="#111" stroke-width="3"/></svg></button>
    <button aria-label="TradingView"><svg viewBox="0 0 30 30"><path d="M0 0h30v30H0z" fill="#131722"/><path d="M3 10h11v11H9v-6H3zM20 10h6l-5 11h-6z" fill="#fff"/><circle cx="17" cy="12" r="2.300" fill="#fff"/></svg></button>
    <button aria-label="Aria"><svg viewBox="0 0 30 30"><rect width="30" height="30" rx="5" fill="#ff7100"/><path d="M3 23 15 7h7l5 16h-5l-2-7-7 7H9l8-12-10 12z" fill="#fff"/></svg></button>
    <button class="run" aria-label="Steam"><svg viewBox="0 0 30 30"><circle cx="15" cy="15" r="14" fill="#134a80"/><path d="M1 12a14 14 0 0 1 28 1z" fill="#0c1d3c"/><circle cx="20" cy="11" r="4.500" fill="none" stroke="#fff" stroke-width="2.500"/><path d="m1 16 9 5 8-7" fill="none" stroke="#fff" stroke-width="4"/><circle cx="10" cy="21" r="3.500" fill="#fff"/></svg></button>
    <button aria-label="Webtoon"><svg viewBox="0 0 30 30"><rect width="30" height="30" rx="5" fill="url(#gr)"/><path d="m5 9 4 11 6-7 6 7 4-11" fill="none" stroke="#fff" stroke-width="5" stroke-linejoin="round"/></svg></button>
    <button class="run"><b class="pdf">PDF<small>View &amp; Edit</small></b></button>
    <button class="run" aria-label="Settings"><svg viewBox="0 0 30 30"><path d="m12 0h6l1 5 5-3 4 5-3 4 4 2v5l-4 1 2 5-4 4-5-2-1 4h-5l-1-4-5 2-4-4 2-5-4-1v-5l4-2-3-4 4-5 5 3z" fill="#76848f"/><circle cx="15" cy="15" r="7" fill="#0d5dab"/><circle cx="15" cy="15" r="5" fill="#2f92e6"/></svg></button>
    <button class="run"><b class="hex">あ</b></button>
  </div>
  <div class="tray">
    <svg class="i s18" viewBox="0 0 18 18"><path d="m2 13 7-8 7 8"/></svg>
    <svg class="i s24" viewBox="0 0 24 24"><path d="M4 10a8 8 0 0 1 15-3V3M20 8h-5M4 19v-5h5M4 15q3 6 8 6"/><circle cx="17" cy="17" r="5.500" fill="red" stroke="none"/></svg>
    <span class="lang">ENG<br>US</span>
    <div class="stat">
    <svg class="i s20" viewBox="0 0 20 20"><path d="M1 8q9-8 18 0M4 11q6-5 12 0M7 14q3-3 6 0"/><circle cx="10" cy="16.500" r="1"/></svg>
    <svg class="i s20" viewBox="0 0 20 20"><path d="M1 7h4l5-4v14l-5-4H1zM13 7q2 3 0 6M16 5q3 5 0 10"/></svg>
    <svg class="i s20" viewBox="0 0 20 20"><rect x="5" y="6" width="13" height="9" rx="1"/><path d="M7 8h9v5H7z" fill="#fff"/><path d="M3 2v3M6 2v3M1 5h7v3H1zM4 8v9"/></svg>
    </div>
    <span class="clock">7:32 pm<br>18/2/2025</span>
    <svg class="i s18" viewBox="0 0 18 18"><path d="M9 1q5 9-7 13 8 4 13-3Q18 4 9 1z"/></svg>
  </div>
</footer>
</body>
</html>
```
FILE: styles.css
```css
* { box-sizing: border-box; }
body { margin: 0; min-height: 100vh; display: flex; flex-direction: column; font-family: "Open Sans", "Noto Sans", sans-serif; background: #0e1525; }
button { border: 0; padding: 0; margin: 0; background: none; color: inherit; font: inherit; display: flex; align-items: center; justify-content: center; flex: none; }
input { border: 0; padding: 0; background: none; color: inherit; font: inherit; outline: 0; min-width: 0; }
a { color: inherit; text-decoration: none; }
svg { flex: none; display: block; }
i { font-style: normal; }
.defs { position: absolute; width: 0; height: 0; }
.i { fill: none; stroke: currentColor; stroke-width: 1.5; }
.w1 { stroke-width: 1; }
.w2 { stroke-width: 2; }
.s6 { width: 6px; height: 6px; }
.s8 { width: 8px; height: 8px; }
.s10 { width: 10px; height: 10px; }
.s12 { width: 12px; height: 12px; }
.s16 { width: 16px; height: 16px; }
.s18 { width: 18px; height: 18px; }
.s20 { width: 20px; height: 20px; }
.s24 { width: 24px; height: 24px; }

/* Browser chrome */
.tabstrip { height: 50px; background: #68234d; display: flex; align-items: center; }
.tab-menu { width: 34px; height: 34px; border-radius: 11px; background: #9e6f8c; margin-left: 8px; margin-right: 4px; color: #120a2a; }
.tab-menu svg { stroke-width: 3; }
.tabs { display: flex; }
.tabs button { flex: 1; position: relative; }
.tabs button::before { content: ""; position: absolute; left: 50%; margin-left: -11px; width: 22px; height: 35px; border-radius: 10px; background: #bb9bb1; }
.tabs button::after { content: ""; position: absolute; right: -1px; width: 2px; height: 20px; background: #9e6f8c; }
.tabs svg, .tabs .fav { position: relative; width: 20px; height: 20px; }
.dim svg { opacity: .65; }
.t-a { width: 174px; }
.t-b { width: 252px; margin: 0 8px 0 9px; }
.t-c { width: 28px; }
.t-d { width: 825px; margin-left: 4px; }
.fav { display: flex; align-items: center; justify-content: center; width: 20px; height: 20px; font-size: 13px; line-height: 20px; color: #fff; }
.fav.cal { background: #fff; border: 4px solid #4285f4; border-right-color: #fbbc04; border-bottom-color: #34a853; color: #1967d2; font-size: 9px; line-height: 12px; border-radius: 2px; }
.sk { background: #fff; border-radius: 3px; color: #1c2b8c; }
.sk i { color: #e02b2b; }
.rm { background: #b5262b; font-size: 8px; }
.teal { background: #0794b0; }
.navy { background: #131450; border-radius: 10px; font-size: 9px; }
.navy i { color: #f2c230; }
.gb { background: #108a8a; }
.honey { background: #b9b9b9; border-radius: 3px; font-family: "Liberation Serif", serif; font-size: 18px; }
.malw { background: #25a9e5; font-size: 14px; }
.dict { background: linear-gradient(95deg, #17557a 60%, #3a9bd0 60%, #3a9bd0 80%, #d5e4ee 80%); font-size: 8px; font-weight: 400; justify-content: flex-start; padding-left: 1px; }
.group { height: 25px; border-radius: 8px; font-size: 14px; color: #fff; }
.orange { background: #fbab00; color: #2a1a10; width: 66px; margin-left: 7px; }
.pink { background: #cf1a84; width: 70px; margin-right: 18px; }
.grey { background: #5f6368; width: 84px; margin-right: 8px; }
.ai { display: flex; align-items: center; align-self: stretch; border-bottom: 2px solid #5f6368; padding-top: 2px; }
.t-b { align-self: stretch; align-items: center; border-bottom: 3px solid #fbab00; padding-top: 3px; }
.active-tab { width: 40px; height: 42px; align-self: flex-end; margin-left: 3px; padding-bottom: 8px; background: #9e6f8c; border: 2px solid #5f6368; border-bottom: 0; border-radius: 10px 10px 0 0; color: #120a2a; }
.active-tab svg { stroke-width: 2; }
.new-tab { width: 34px; height: 34px; border-radius: 17px; background: #bb9bb1; margin-left: 5px; color: #120a2a; }
.win { display: flex; gap: 1px; margin-left: auto; align-self: stretch; }
.win button { width: 56px; background: #c2bcc0; color: #111; }
.toolbar { height: 58px; background: #9e6f8c; border-bottom: 1px solid #111; display: flex; align-items: center; color: #fff; }
.toolbar > button { width: 45px; height: 30px; }
.toolbar > button:first-child { margin-left: 5px; }
.faded { color: #c9a9bd; }
.omni { flex: 1; height: 42px; border-radius: 21px; background: #87607a; margin-left: 10px; margin-right: 12px; padding: 0 19px 0 6px; display: flex; align-items: center; gap: 11px; }
.site { width: 30px; height: 30px; border-radius: 15px; background: #9e6f8c; }
.address { flex: 1; font-size: 17px; }
.omni-icons { display: flex; gap: 20px; color: #cdbcc8; }
.exts { display: flex; width: 628px; height: 42px; border: 1px solid #ae829d; border-radius: 21px; }
.exts button { flex: 1; }
.exts svg { width: 20px; height: 20px; }
.toolbar .bar { width: 2px; height: 20px; background: #bb9bb1; margin-left: 11px; }
.toolbar > .profile { margin-left: 11px; }
.toolbar > .kebab { margin-right: 5px; }
.profile svg { width: 25px; height: 25px; }
.bookmarks { height: 42px; background: #9e6f8c; display: flex; align-items: center; color: #160b35; font-size: 14px; padding: 0 22px 7px; }
.apps { color: #fff; }
.bookmarks .bar { width: 2px; height: 20px; background: #bb9bb1; margin: 0 20px 0 18px; }
.bookmarks a { display: flex; align-items: center; gap: 10px; margin-right: 24px; white-space: nowrap; }
.fold { width: 20px; height: 16px; stroke-width: 2; color: #5f5470; }

/* Replit */
.replit { flex: 1; display: flex; flex-direction: column; border-top: 1px solid #fff; color: #f5f9fc; font: 500 8px/14px Roboto, sans-serif; padding-bottom: 5px; }
.topbar { height: 30px; display: grid; grid-template-columns: 1fr auto 1fr; align-items: center; }
.top-left { display: flex; align-items: center; padding-left: 10px; gap: 10px; color: #c2c8cc; }
.top-left b { color: #f5f9fc; font-weight: 500; font-size: 9px; margin-left: -5px; }
.appicon { background: #08171e; }
.stop { display: flex; color: #f5f9fc; font-size: 9px; }
.stop button { height: 20px; }
.stop-main { background: #3c445c; width: 43px; gap: 4px; border-radius: 3px 0 0 3px; }
.stop-main i { width: 7px; height: 8px; border-radius: 1px; background: #c2c8cc; }
.stop-more { background: #1c2333; width: 13px; border-radius: 0 3px 3px 0; }
.top-right { display: flex; justify-content: flex-end; align-items: center; gap: 4px; padding-right: 10px; }
.chip { background: #1c2333; height: 20px; padding: 0 5px; gap: 6px; border-radius: 3px; font-size: 9px; }
.bell { width: 20px; }
.me, .av { display: flex; align-items: center; justify-content: center; width: 15px; height: 15px; border-radius: 8px; background: #2b3245; color: #9da2a6; font-size: 6px; position: relative; flex: none; margin-left: 5px; }
.me i { position: absolute; left: -2px; bottom: -2px; width: 8px; height: 8px; border-radius: 4px; background: #5a2b06; color: #ff8a30; line-height: 8px; text-align: center; }
.work { flex: 1; display: flex; }
.rail { width: 30px; display: flex; flex-direction: column; align-items: center; color: #9da2a6; }
.rail-files { width: 20px; height: 20px; border: 1px solid #2b3245; border-radius: 3px; }
.rail-tools { margin: auto 0; display: flex; flex-direction: column; align-items: center; }
.rail-tools button { width: 30px; height: 22px; position: relative; }
.rail-tools .on::before { content: ""; position: absolute; left: 6px; width: 2px; height: 2px; background: #9da2a6; }
.rail hr { width: 15px; margin: 4px 0 5px; border: 0; border-top: 1px solid #2b3245; }
.violet { color: #7a68e0; }
.lilac { color: #8f83c8; }
.sand { color: #a58a4a; }
.leaf { color: #4cb865; }
.help { height: 20px; font-size: 12px; font-weight: 400; }
.pane { background: #1c2333; display: flex; flex-direction: column; min-width: 0; border-radius: 3px; }
.chat-pane { flex: 753; }
.web-pane { flex: 1129; margin-left: 3px; margin-right: 5px; }
.pane-tabs { height: 20px; display: flex; background: #171d2d; border-bottom: 1px solid #2b3245; color: #c2c8cc; flex: none; }
.ptab { gap: 4px; padding: 0 4px; justify-content: flex-start; border-right: 1px solid #2b3245; height: 19px; }
.ptab.agent { width: 60px; padding-left: 3px; }
.ptab.sel { background: #1c2333; color: #f5f9fc; height: 20px; font-weight: 700; width: 69px; padding-left: 5px; }
.chat-pane .sel { border-top: 1px solid #0079f2; }
.ptab .close { margin-left: auto; }
.ptab.add { border: 0; padding: 0 7px; }
.p1 { width: 66px; }
.p3 { width: 64px; }
.p4 { width: 92px; }
.more { margin-left: auto; width: 20px; font-size: 10px; }
.chat-head { display: flex; justify-content: space-between; align-items: center; height: 18px; padding: 0 5px; }
.chat-head div { display: flex; align-items: center; gap: 10px; }
.chat-head .end { gap: 8px; }
.newchat, .ttl { gap: 5px; }
.chat { padding: 8px 13px 0; font-family: Inter, sans-serif; }
.chat p { margin: 0; padding-right: 12px; }
.chat .old { color: #9da2a6; }
.chat ol { margin: 9px 0 8px; padding-left: 0; line-height: 17px; list-style-position: inside; }
.chat ul { margin: 11px 0 10px; padding-left: 10px; line-height: 16px; }
.user { display: flex; justify-content: flex-end; margin-top: 25px; align-items: flex-start; }
.chat .user p { width: 250px; background: #10447c; border-radius: 2px; padding: 3px 12px 4px 5px; }
.user .av { margin-top: 3px; }
.who { display: flex; align-items: center; gap: 5px; height: 16px; margin-top: 14px; color: #9da2a6; font-family: Roboto, sans-serif; font-weight: 400; }
.who svg { width: 12px; height: 16px; }
.who b { font-weight: 500; color: #c2c8cc; }
.read { display: flex; align-items: center; gap: 4px; height: 16px; margin-top: 8px; padding: 0 6px 0 3px; color: #c2c8cc; }
.push { margin-left: auto; }
.chat .intro { margin-top: 7px; }
.chat .gap { margin-top: 10px; }
code { background: #2b3245; border-radius: 2px; color: #d07a22; padding: 2px 3px; font: 8px/12px "DejaVu Sans Mono", monospace; }
.filebox { height: 22px; margin-top: 5px; background: #2b3245; border: 1px solid #3c445c; border-radius: 2px; display: flex; align-items: center; gap: 4px; padding: 0 5px; }
.cyan { color: #0d8ea3; }
.filebox em { font-style: normal; font-weight: 700; line-height: 10px; padding: 0 3px; border-radius: 2px; font-family: Roboto, sans-serif; }
.filebox .add { margin-left: auto; background: #123b1e; color: #a4e8b0; }
.filebox .del { background: #4e1219; color: #f5b5b5; }
.chat .after { margin: 5px 0 10px; }
.check { display: flex; gap: 5px; background: #2b3245; border-radius: 2px; height: 49px; padding: 4px 3px 4px 6px; color: #9da2a6; font-family: Lato, sans-serif; }
.check > svg { margin-top: 1px; }
.check div { display: flex; flex-direction: column; }
.check b { color: #f5f9fc; font-weight: 500; font-family: Inter, sans-serif; }
.check .lt { color: #c2c8cc; }
.check .check-r { margin-left: auto; align-items: flex-end; justify-content: space-between; }
.check-r > button:only-child { margin-top: auto; }
.check-r svg { margin-right: 3px; }
.check-r button { height: 17px; border: 1px solid #4e566e; border-radius: 2px; padding: 0 5px 0 4px; gap: 1px; color: #c2c8cc; }
.chat .check + .user { margin-top: 30px; }
.notice { margin-top: 5px; height: 22px; border: 1px solid #017077; background: #00424a; border-radius: 2px; color: #57cfe8; display: flex; align-items: center; gap: 10px; padding: 0 8px 0 5px; font-family: Lato, sans-serif; font-weight: 400; }
.notice a { text-decoration: underline; color: #8be4f4; }
.notice button { margin-left: auto; }
.check.last { margin-top: 10px; }
.composer { margin: auto 8px 5px; border: 1px solid #3c445c; background: #2b3245; border-radius: 2px; height: 65px; display: flex; flex-direction: column; }
.comp-top { display: flex; align-items: center; gap: 8px; height: 18px; border-bottom: 1px solid #3c445c; padding: 0 4px 0 2px; color: #9da2a6; flex: none; }
.comp-top button { gap: 3px; font-weight: 400; }
.model { margin-left: auto; display: flex; gap: 3px; align-items: center; color: #d8dde0; font-family: Lato, sans-serif; }
.composer input { height: 23px; padding: 0 6px; font-size: 9px; font-weight: 400; }
.composer input::placeholder { color: #9da2a6; }
.comp-bot { display: flex; align-items: center; padding: 0 4px 0 5px; gap: 10px; color: #9da2a6; }
.ctx { gap: 5px; color: #d8dde0; font-size: 9px; }
.comp-bot a { margin-left: auto; font-family: Lato, sans-serif; }
.send { width: 15px; height: 15px; background: #40403c; border-radius: 2px; font-size: 10px; }

/* Webview */
.urlrow { height: 22px; display: flex; align-items: center; gap: 3px; padding: 0 3px 0 4px; color: #c2c8cc; border-bottom: 1px solid #2b3245; }
.urlrow > button:not(.ob) { width: 14px; }
.urlbox { flex: 1; display: flex; align-items: center; height: 15px; background: #2b3245; border: 1px solid #3c445c; border-radius: 2px; padding: 0 3px; }
.urlbox input { flex: 1; color: #f5f9fc; padding-left: 5px; }
.host { color: #4cc36b; border-right: 1px solid #3c445c; padding-right: 3px; line-height: 13px; }
.host mark { background: #0a5a12; color: #4cd06b; padding: 1px 2px; }
.ob { height: 15px; width: 14px; border: 1px solid #3c445c; border-radius: 3px; position: relative; }
.ob.wide { width: 48px; gap: 6px; }
.cnt { position: absolute; top: -3px; right: -1px; width: 9px; height: 9px; border-radius: 5px; background: #f5555a; color: #5a0a10; line-height: 9px; }
.view { flex: 1; display: flex; border-left: 1px solid #2b3245; }
.site-page { flex: 1; background: #000; font-family: Inter, sans-serif; color: #8a8a8a; }
.sitenav { height: 96px; border-bottom: 1px solid #222; display: grid; grid-template-columns: 1fr 70px 1fr; color: #fff; font-size: 7px; font-weight: 700; letter-spacing: 1px; line-height: 20px; }
.navl, .navr, .menus, .cta { display: flex; align-items: center; }
.navl { justify-content: flex-end; padding-right: 104px; gap: 72px; }
.menus { gap: 84px; }
.navr { padding-left: 130px; gap: 26px; }
.cta { gap: 19px; }
.sitenav a { display: flex; align-items: center; gap: 4px; }
.sitenav .contact { background: #0f0; color: #063; font-weight: 500; border-radius: 10px; width: 83px; justify-content: center; }
.logo { display: flex; flex-direction: column; align-items: center; justify-content: center; line-height: 10px; background: radial-gradient(closest-side, #03280e, #000); }
.logo svg { width: 36px; height: 46px; filter: drop-shadow(0 0 5px #084); }
.logo b { color: #76b85a; font: 700 10px/12px "DejaVu Sans", sans-serif; }
.logo small { font-size: 4px; line-height: 5px; color: #888; letter-spacing: 0; }
.hero { width: 640px; margin: 4px auto 0; display: grid; grid-template-columns: 1fr 305px; gap: 25px; align-items: center; }
.hero h1 { margin: 0 0 14px; font-size: 36px; line-height: 38px; color: #fff; font-weight: 700; }
.hero h1 span { color: #0f0; }
.hero p { margin: 0 0 19px; font-size: 11px; line-height: 18px; }
.hero button { width: 154px; height: 28px; background: #0f0; color: #021; font-size: 9px; gap: 10px; }
.ph { height: 305px; border: 1px solid #003300; }
.ph svg { width: 100%; height: 100%; fill: none; stroke: #0f06; stroke-width: 2; stroke-linecap: round; stroke-linejoin: round; }
.feats { width: 640px; margin: 100px auto 0; display: grid; grid-template-columns: repeat(4, 1fr); gap: 20px; text-align: center; }
.feats span { display: flex; width: 40px; height: 40px; margin: 0 auto; border-radius: 20px; background: #001a00; align-items: center; justify-content: center; }
.feats svg { width: 20px; height: 20px; fill: none; stroke: #0f0; stroke-width: 2; stroke-linecap: round; stroke-linejoin: round; }
.feats h3 { margin: 11px 0 4px; font-size: 9px; line-height: 14px; color: #fff; font-weight: 600; }
.feats p { margin: 0 4px; font-size: 9px; line-height: 13px; }
.stats { width: 960px; margin: 88px auto 0; display: grid; grid-template-columns: repeat(4, 1fr); text-align: center; font-size: 10px; line-height: 18px; }
.stats b { display: block; color: #0f0; font-size: 23px; line-height: 30px; }
.scroll { width: 21px; background: #f1f1f1; display: flex; flex-direction: column; align-items: center; }
.scroll span { width: 17px; height: 157px; background: #c1c1c1; }
.scroll i { border: 5px solid transparent; }
.scroll .up { border-bottom-color: #a0a0a0; margin: 3px 0 8px; }
.scroll .dn { border-top-color: #505050; margin: auto 0 3px; }

/* Taskbar */
.taskbar { height: 60px; display: flex; align-items: center; padding-left: 13px; color: #fff; background: linear-gradient(90deg, #252322 0, #2c2121 30%, #3d1619 40%, #3a181a 44%, #232121 53%, #252121 56%, #4b1517 62%, #42181b 68%, #351b1e 80%, #301e20 100%); }
.apps-row { display: flex; width: 1541px; }
.apps-row button { flex: 1; height: 60px; position: relative; }
.apps-row svg { width: 30px; height: 30px; position: relative; }
.run::after { content: ""; position: absolute; bottom: 6px; width: 8px; height: 4px; border-radius: 2px; background: #9a9294; }
.cur::before { content: ""; position: absolute; width: 48px; height: 50px; border-radius: 5px; background: #ffffff18; }
.cur::after { width: 20px; background: #f08468; }
.note { position: absolute; left: 31px; top: 8px; min-width: 20px; height: 20px; padding: 0 2px; border-radius: 10px; background: #f47c64; color: #111; font-size: 14px; line-height: 20px; text-align: center; }
.note.sq { background: #e93b3b; color: #fff; font-size: 10px; border-radius: 7px; height: 15px; line-height: 15px; top: 15px; }
.zoom { width: 30px; height: 30px; border-radius: 15px; background: #0b5cff; font: 700 10px/28px Lato, sans-serif; }
.office { width: 30px; height: 28px; border-radius: 2px; font-size: 13px; line-height: 28px; text-align: left; padding-left: 3px; }
.word { background: linear-gradient(90deg, #185abd 55%, #41a5ee 55%); }
.ppt { background: linear-gradient(90deg, #c43e1c 55%, #ff8f6b 55%); border-radius: 14px; }
.xls { background: linear-gradient(90deg, #107c41 55%, #33c481 55%); }
.adobe { width: 28px; height: 27px; border: 2px solid; font-size: 14px; line-height: 22px; }
.ps { background: #0c0050; color: #8ec8ff; }
.aii { background: #2b1602; color: #ff9a00; }
.pdf { width: 30px; height: 30px; background: linear-gradient(60deg, #d8180f 70%, #fff 70%, #fff 76%, #d8180f 76%); font-size: 9px; font-weight: 400; line-height: 22px; text-align: left; display: flex; flex-direction: column; padding-top: 3px; padding-left: 3px; }
.pdf small { font-size: 4px; line-height: 4px; }
.hex { width: 24px; height: 28px; background: #c9252b; clip-path: polygon(50% 0, 100% 25%, 100% 75%, 50% 100%, 0 75%, 0 25%); font: 700 15px/26px "Noto Sans CJK JP", sans-serif; }
.tray { display: flex; align-items: center; margin-left: auto; padding-right: 24px; font-size: 14px; line-height: 20px; }
.lang { text-align: center; margin: 0 23px 0 14px; }
.tray > .s24 { margin-left: 9px; }
.stat { display: flex; gap: 9px; margin-right: 22px; }
.clock { text-align: right; margin-right: 13px; }
```
